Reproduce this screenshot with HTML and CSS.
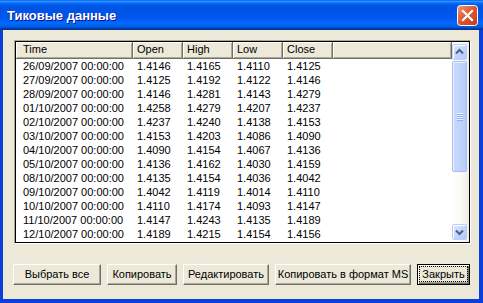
FILE: index.html
```html
<!DOCTYPE html>
<html lang="ru">
<head>
<meta charset="utf-8">
<title>Тиковые данные</title>
<link rel="stylesheet" href="styles.css">
</head>
<body>
<div class="window">
  <div class="titlebar">
    <span class="title">Тиковые данные</span>
    <div class="close">
      <svg width="21" height="21" viewBox="0 0 21 21">
        <defs>
          <linearGradient id="cg" x1="0" y1="0" x2="1" y2="1">
            <stop offset="0" stop-color="#F09A7E"/>
            <stop offset="0.45" stop-color="#DD5A35"/>
            <stop offset="1" stop-color="#C23A18"/>
          </linearGradient>
        </defs>
        <rect x="0.5" y="0.5" width="20" height="20" rx="3" fill="url(#cg)" stroke="#FFFFFF"/>
        <path d="M6 6 L15 15 M15 6 L6 15" stroke="#FFFFFF" stroke-width="2.2" stroke-linecap="square"/>
      </svg>
    </div>
  </div>
  <div class="client">
    <div class="listbox">
      <div class="listin">
        <div class="list">
          <div class="grid header">
            <div class="hc first">Time</div>
            <div class="hc">Open</div>
            <div class="hc">High</div>
            <div class="hc">Low</div>
            <div class="hc">Close</div>
            <div class="hc fill"></div>
          </div>
          <div class="grid row"><div class="c first">26/09/2007 00:00:00</div><div class="c">1.4146</div><div class="c">1.4165</div><div class="c">1.4110</div><div class="c">1.4125</div></div>
          <div class="grid row"><div class="c first">27/09/2007 00:00:00</div><div class="c">1.4125</div><div class="c">1.4192</div><div class="c">1.4122</div><div class="c">1.4146</div></div>
          <div class="grid row"><div class="c first">28/09/2007 00:00:00</div><div class="c">1.4146</div><div class="c">1.4281</div><div class="c">1.4143</div><div class="c">1.4279</div></div>
          <div class="grid row"><div class="c first">01/10/2007 00:00:00</div><div class="c">1.4258</div><div class="c">1.4279</div><div class="c">1.4207</div><div class="c">1.4237</div></div>
          <div class="grid row"><div class="c first">02/10/2007 00:00:00</div><div class="c">1.4237</div><div class="c">1.4240</div><div class="c">1.4138</div><div class="c">1.4153</div></div>
          <div class="grid row"><div class="c first">03/10/2007 00:00:00</div><div class="c">1.4153</div><div class="c">1.4203</div><div class="c">1.4086</div><div class="c">1.4090</div></div>
          <div class="grid row"><div class="c first">04/10/2007 00:00:00</div><div class="c">1.4090</div><div class="c">1.4154</div><div class="c">1.4067</div><div class="c">1.4136</div></div>
          <div class="grid row"><div class="c first">05/10/2007 00:00:00</div><div class="c">1.4136</div><div class="c">1.4162</div><div class="c">1.4030</div><div class="c">1.4159</div></div>
          <div class="grid row"><div class="c first">08/10/2007 00:00:00</div><div class="c">1.4135</div><div class="c">1.4154</div><div class="c">1.4036</div><div class="c">1.4042</div></div>
          <div class="grid row"><div class="c first">09/10/2007 00:00:00</div><div class="c">1.4042</div><div class="c">1.4119</div><div class="c">1.4014</div><div class="c">1.4110</div></div>
          <div class="grid row"><div class="c first">10/10/2007 00:00:00</div><div class="c">1.4110</div><div class="c">1.4174</div><div class="c">1.4093</div><div class="c">1.4147</div></div>
          <div class="grid row"><div class="c first">11/10/2007 00:00:00</div><div class="c">1.4147</div><div class="c">1.4243</div><div class="c">1.4135</div><div class="c">1.4189</div></div>
          <div class="grid row"><div class="c first">12/10/2007 00:00:00</div><div class="c">1.4189</div><div class="c">1.4215</div><div class="c">1.4154</div><div class="c">1.4156</div></div>
        </div>
        <div class="vscroll">
          <div class="sbtn">
            <svg width="15" height="16" viewBox="0 0 15 16"><path d="M4 9.5 L7.5 6 L11 9.5" fill="none" stroke="#4D6185" stroke-width="2"/></svg>
          </div>
          <div class="track">
            <div class="thumb">
              <svg width="8" height="8" viewBox="0 0 8 8">
                <path d="M1 0.5 H7 M1 2.5 H7 M1 4.5 H7 M1 6.5 H7" stroke="#EEF4FE" stroke-width="1"/>
                <path d="M1 1.5 H7 M1 3.5 H7 M1 5.5 H7 M1 7.5 H7" stroke="#8CB0F8" stroke-width="1"/>
              </svg>
            </div>
          </div>
          <div class="sbtn">
            <svg width="15" height="16" viewBox="0 0 15 16"><path d="M4 6.5 L7.5 10 L11 6.5" fill="none" stroke="#4D6185" stroke-width="2"/></svg>
          </div>
        </div>
      </div>
    </div>
    <div class="buttons">
      <div class="btn w-select">Выбрать все</div>
      <div class="btn w-copy">Копировать</div>
      <div class="btn w-edit">Редактировать</div>
      <div class="btn w-ms">Копировать в формат MS</div>
      <div class="btn default w-close"><span class="focus">Закрыть</span></div>
    </div>
  </div>
</div>
</body>
</html>
```

FILE: styles.css
```css
* { box-sizing: border-box; }
html, body { margin: 0; padding: 0; background: #ECE9D8; }
body { font-family: "Liberation Sans", Arial, sans-serif; font-size: 11px; color: #000; }

.window {
  width: 483px;
  height: 303px;
  display: flex;
  flex-direction: column;
  background: #0831D9;
}

.titlebar {
  height: 30px;
  flex: none;
  display: flex;
  align-items: center;
  padding: 0 5px 0 7px;
  background: linear-gradient(to bottom,
    #0058EE 0%, #3593FF 4%, #288EFF 6%, #127DFF 8%, #036FFC 10%,
    #0262EE 14%, #0057E5 20%, #0054E3 24%, #0055EB 56%, #005BF5 66%,
    #026AFE 76%, #0062EF 86%, #0052D6 92%, #0040AB 94%, #003092 100%);
}
.title {
  flex: 1;
  color: #FFFFFF;
  font: bold 13px "Liberation Sans", Arial, sans-serif;
  text-shadow: 1px 1px #0F1089;
  padding-top: 1px;
}
.close { width: 21px; height: 21px; display: flex; }

.client {
  flex: 1;
  background: #ECE9D8;
  border-style: solid;
  border-color: #0B3FDB;
  border-width: 0 4px 4px 3px;
  padding: 10px 9px 14px 11px;
  display: flex;
  flex-direction: column;
}

.listbox {
  width: 457px;
  height: 204px;
  border: 1px solid;
  border-color: #ACA899 #FFFFFF #FFFFFF #ACA899;
}
.listin {
  height: 100%;
  border: 1px solid #000;
  background: #FFFFFF;
  display: flex;
  overflow: hidden;
}
.list { flex: 1; overflow: hidden; }

.grid {
  display: grid;
  grid-template-columns: 117px 50px 50px 50px 50px 1fr;
}
.header { height: 17px; }
.hc {
  background: #ECE9D8;
  border-right: 1px solid #716F64;
  border-bottom: 1px solid #716F64;
  box-shadow: inset 1px 1px #FFFFFF, inset -1px -1px #ACA899;
  padding-left: 4px;
  line-height: 15px;
  white-space: nowrap;
}
.hc.first { padding-left: 7px; }
.row { height: 14px; line-height: 14px; }
.c { padding-left: 4px; white-space: nowrap; }
.c.first { padding-left: 7px; }

.vscroll {
  width: 17px;
  flex: none;
  display: flex;
  flex-direction: column;
  padding: 2px 1px 2px 0;
  background: linear-gradient(to right, #FEFEFB 0%, #FBFAF6 50%, #EEEDE5 100%);
}
.sbtn {
  width: 15px;
  height: 16px;
  flex: none;
  border: 1px solid #B9CDF9;
  border-radius: 2px;
  background: linear-gradient(to bottom right, #DCE7FE, #C1D3FB 60%, #B3C8F6);
  box-shadow: inset 1px 1px #FFFFFF;
  display: flex;
  align-items: center;
  justify-content: center;
}
.sbtn svg { flex: none; margin: -1px; }
.track { flex: 1; padding-top: 1px; }
.thumb {
  width: 15px;
  height: 111px;
  border: 1px solid #A6BEF4;
  border-radius: 2px;
  background: linear-gradient(to right, #C9D8FC, #C3D4FC 50%, #B7CBF8);
  box-shadow: inset 1px 1px #EAF0FE;
  display: flex;
  align-items: center;
  justify-content: center;
}

.buttons {
  margin-top: 20px;
  margin-left: -1px;
  display: flex;
  gap: 6px;
  height: 21px;
}
.btn {
  height: 21px;
  display: flex;
  align-items: center;
  justify-content: center;
  background: #ECE9D8;
  border: 1px solid;
  border-color: #FFFFFF #716F64 #716F64 #FFFFFF;
  box-shadow: inset -1px -1px #ACA899;
  white-space: nowrap;
  padding-bottom: 1px;
}
.btn.default {
  border: 1px solid #000;
  box-shadow: inset 1px 1px #FFFFFF, inset -1px -1px #716F64, inset -2px -2px #ACA899;
}
.focus {
  border: 1px dotted #000;
  padding: 1px 2px;
  line-height: 12px;
}
.w-select { width: 88px; }
.w-copy { width: 70px; }
.w-edit { width: 86px; }
.w-ms { width: 136px; }
.w-close { width: 53px; }
```
